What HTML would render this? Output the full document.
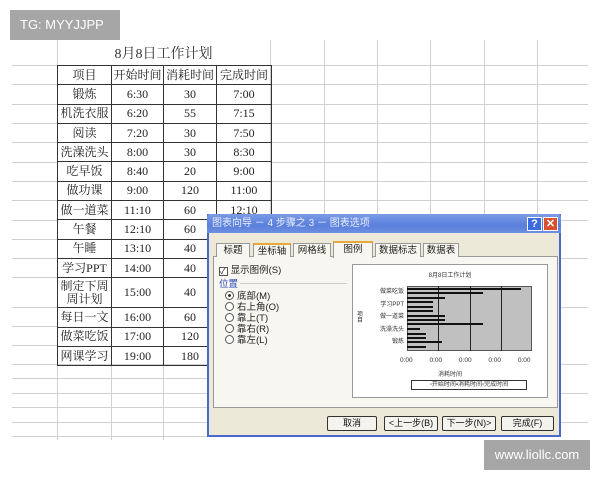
<!DOCTYPE html>
<html><head><meta charset="utf-8"><style>
*{margin:0;padding:0;box-sizing:border-box}
body{width:600px;height:480px;background:#fff;position:relative;overflow:hidden;font-family:"Liberation Sans","Noto Sans CJK SC",sans-serif}
.a{position:absolute}
.hl{position:absolute;height:1px;background:#d0d0d0}
.vl{position:absolute;width:1px;background:#d0d0d0}
.tb{position:absolute;left:57px;top:65px;width:214px;table-layout:fixed;border-collapse:collapse;font-family:"Liberation Serif","Noto Serif CJK SC",serif;font-size:12px;color:#222;white-space:nowrap}
.tb td{border:1.5px solid #333;text-align:center;padding:0;height:19.3px;line-height:15px;overflow:hidden}
.btn{position:absolute;top:416px;height:15px;border:1px solid #333;background:#f4f3ee;font-size:9px;text-align:center;line-height:13px;color:#111;border-radius:2px;white-space:nowrap;overflow:hidden}
.tab{position:absolute;top:243px;height:14px;border:1px solid #999;border-bottom:none;background:#f7f6f1;font-size:9.5px;text-align:center;line-height:13px;color:#222;white-space:nowrap}
.rad{position:absolute;left:225px;font-size:9.5px;color:#222;line-height:11px}
.rad i{display:inline-block;width:9px;height:9px;border:1px solid #555;border-radius:50%;margin-right:3px;vertical-align:-1px;background:#fff}
.bar{position:absolute;left:407px;height:2px;background:#111}
</style></head><body>
<div class="a" style="left:10px;top:10px;width:110px;height:30px;background:#a6a6a6;color:#fff;font-size:13px;line-height:30px;padding-left:10px">TG: MYYJJPP</div>

<div class="vl" style="left:57px;top:40px;height:400px"></div>
<div class="vl" style="left:111px;top:365px;height:75px"></div>
<div class="vl" style="left:163px;top:365px;height:75px"></div>
<div class="vl" style="left:270px;top:40px;height:175px"></div>
<div class="vl" style="left:324px;top:40px;height:175px"></div>
<div class="vl" style="left:377px;top:40px;height:175px"></div>
<div class="vl" style="left:430px;top:40px;height:175px"></div>
<div class="vl" style="left:484px;top:40px;height:175px"></div>
<div class="vl" style="left:537px;top:40px;height:175px"></div>
<div class="hl" style="left:270px;top:65px;width:318px"></div>
<div class="hl" style="left:270px;top:84px;width:318px"></div>
<div class="hl" style="left:270px;top:104px;width:318px"></div>
<div class="hl" style="left:270px;top:123px;width:318px"></div>
<div class="hl" style="left:270px;top:142px;width:318px"></div>
<div class="hl" style="left:270px;top:162px;width:318px"></div>
<div class="hl" style="left:270px;top:181px;width:318px"></div>
<div class="hl" style="left:270px;top:200px;width:318px"></div>
<div class="hl" style="left:12px;top:65px;width:45px"></div>
<div class="hl" style="left:12px;top:84px;width:45px"></div>
<div class="hl" style="left:12px;top:104px;width:45px"></div>
<div class="hl" style="left:12px;top:123px;width:45px"></div>
<div class="hl" style="left:12px;top:142px;width:45px"></div>
<div class="hl" style="left:12px;top:162px;width:45px"></div>
<div class="hl" style="left:12px;top:181px;width:45px"></div>
<div class="hl" style="left:12px;top:200px;width:45px"></div>
<div class="hl" style="left:12px;top:220px;width:45px"></div>
<div class="hl" style="left:12px;top:239px;width:45px"></div>
<div class="hl" style="left:12px;top:258px;width:45px"></div>
<div class="hl" style="left:12px;top:277px;width:45px"></div>
<div class="hl" style="left:12px;top:307px;width:45px"></div>
<div class="hl" style="left:12px;top:326px;width:45px"></div>
<div class="hl" style="left:12px;top:345px;width:45px"></div>
<div class="hl" style="left:12px;top:364px;width:195px"></div>
<div class="hl" style="left:12px;top:378px;width:195px"></div>
<div class="hl" style="left:12px;top:393px;width:195px"></div>
<div class="hl" style="left:12px;top:407px;width:195px"></div>
<div class="hl" style="left:12px;top:422px;width:195px"></div>
<div class="hl" style="left:12px;top:436px;width:195px"></div>
<div class="hl" style="left:561px;top:220px;width:27px"></div>
<div class="hl" style="left:561px;top:258px;width:27px"></div>
<div class="hl" style="left:561px;top:307px;width:27px"></div>
<div class="hl" style="left:561px;top:364px;width:27px"></div>
<div class="hl" style="left:561px;top:393px;width:27px"></div>
<div class="hl" style="left:561px;top:422px;width:27px"></div>

<div class="a" style="left:57px;top:43px;width:213px;text-align:center;font-size:14px;color:#333;font-family:'Liberation Serif','Noto Serif CJK SC',serif">8月8日工作计划</div>

<table class="tb">
<colgroup><col style="width:54px"><col style="width:52px"><col style="width:53px"><col style="width:55px"></colgroup>
<tr><td>项目</td><td>开始时间</td><td>消耗时间</td><td>完成时间</td></tr>
<tr><td>锻炼</td><td>6:30</td><td>30</td><td>7:00</td></tr>
<tr><td>机洗衣服</td><td>6:20</td><td>55</td><td>7:15</td></tr>
<tr><td>阅读</td><td>7:20</td><td>30</td><td>7:50</td></tr>
<tr><td>洗澡洗头</td><td>8:00</td><td>30</td><td>8:30</td></tr>
<tr><td>吃早饭</td><td>8:40</td><td>20</td><td>9:00</td></tr>
<tr><td>做功课</td><td>9:00</td><td>120</td><td>11:00</td></tr>
<tr><td>做一道菜</td><td>11:10</td><td>60</td><td>12:10</td></tr>
<tr><td>午餐</td><td>12:10</td><td>60</td><td>13:10</td></tr>
<tr><td>午睡</td><td>13:10</td><td>40</td><td>13:50</td></tr>
<tr><td>学习PPT</td><td>14:00</td><td>40</td><td>14:40</td></tr>
<tr><td style="height:30px;line-height:13px;white-space:normal">制定下周<br>周计划</td><td>15:00</td><td>40</td><td>15:40</td></tr>
<tr><td>每日一文</td><td>16:00</td><td>60</td><td>17:00</td></tr>
<tr><td>做菜吃饭</td><td>17:00</td><td>120</td><td>19:00</td></tr>
<tr><td>网课学习</td><td>19:00</td><td>180</td><td>22:00</td></tr>
</table>

<div class="a" style="left:207px;top:214px;width:354px;height:223px;background:#ece9d8;border:2px solid #4a68c8;border-top:none"></div>
<div class="a" style="left:207px;top:214px;width:354px;height:19px;background:linear-gradient(#7b9be6,#5a7fdc 60%,#6d8fe0);border-radius:3px 3px 0 0;color:#e8eefc;font-size:10px;line-height:19px;padding-left:5px">图表向导 － 4 步骤之 3 － 图表选项</div>
<div class="a" style="left:527px;top:217px;width:15px;height:14px;background:#3d6be0;border:1px solid #fff;color:#fff;font-size:11px;text-align:center;line-height:12px;font-weight:bold">?</div>
<div class="a" style="left:543px;top:217px;width:15px;height:14px;background:#d9502d;border:1px solid #fff;color:#fff;font-size:11px;text-align:center;line-height:12px;font-weight:bold">✕</div>

<div class="a" style="left:213px;top:256px;width:345px;height:152px;border:1px solid #999;background:#f7f6f1"></div>
<div class="tab" style="left:216px;width:34px">标题</div>
<div class="tab" style="left:253px;width:38px;border-top:2px solid #e8a83a">坐标轴</div>
<div class="tab" style="left:293px;width:38px">网格线</div>
<div class="tab" style="left:333px;top:241px;height:17px;width:40px;border-top:2px solid #e8a83a;background:#f7f6f1">图例</div>
<div class="tab" style="left:375px;width:46px">数据标志</div>
<div class="tab" style="left:423px;width:36px">数据表</div>

<div class="a" style="left:219px;top:262px;font-size:9.5px;color:#222"><span style="display:inline-block;width:9px;height:9px;border:1px solid #555;background:#fff;font-size:8px;line-height:7px;vertical-align:-1px">✓</span> 显示图例(S)</div>
<div class="a" style="left:219px;top:276px;font-size:9.5px;color:#2a4bb8">位置</div>
<div class="hl" style="left:240px;top:283px;width:107px;background:#ccc"></div>
<div class="rad" style="top:291px"><i style="background:radial-gradient(#333 25%,#fff 35%)"></i>底部(M)</div>
<div class="rad" style="top:302px"><i></i>右上角(O)</div>
<div class="rad" style="top:313px"><i></i>靠上(T)</div>
<div class="rad" style="top:324px"><i></i>靠右(R)</div>
<div class="rad" style="top:335px"><i></i>靠左(L)</div>

<div class="a" style="left:352px;top:264px;width:196px;height:134px;border:1px solid #999;background:#fff"></div>
<div class="a" style="left:352px;top:270px;width:196px;text-align:center;font-size:6px;color:#333">8月8日工作计划</div>
<div class="a" style="left:407px;top:286px;width:125px;height:65px;background:#c0c0c0;border:1px solid #555"></div>
<div class="vl" style="left:438px;top:286px;height:65px;background:#222"></div>
<div class="vl" style="left:470px;top:286px;height:65px;background:#222"></div>
<div class="vl" style="left:501px;top:286px;height:65px;background:#222"></div>
<div class="bar" style="top:288px;width:114px"></div>
<div class="bar" style="top:292px;width:76px"></div>
<div class="bar" style="top:297px;width:38px"></div>
<div class="bar" style="top:301px;width:26px"></div>
<div class="bar" style="top:306px;width:26px"></div>
<div class="bar" style="top:310px;width:26px"></div>
<div class="bar" style="top:315px;width:38px"></div>
<div class="bar" style="top:319px;width:38px"></div>
<div class="bar" style="top:323px;width:76px"></div>
<div class="bar" style="top:328px;width:13px"></div>
<div class="bar" style="top:333px;width:19px"></div>
<div class="bar" style="top:337px;width:19px"></div>
<div class="bar" style="top:341px;width:35px"></div>
<div class="bar" style="top:346px;width:19px"></div>
<div class="a" style="left:362px;top:286px;width:42px;text-align:right;font-size:6px;line-height:12.5px;color:#333">做菜吃饭<br>学习PPT<br>做一道菜<br>洗澡洗头<br>锻炼</div>
<div class="a" style="left:357px;top:312px;font-size:6px;color:#333;width:6px;line-height:6px">项目</div>
<div class="a" style="left:400px;top:357px;width:148px;font-size:6.5px;color:#333;word-spacing:15px">0:00 0:00 0:00 0:00 0:00</div>
<div class="a" style="left:352px;top:369px;width:196px;text-align:center;font-size:6px;color:#333">消耗时间</div>
<div class="a" style="left:411px;top:380px;width:116px;height:10px;border:1px solid #333;font-size:6px;line-height:8px;text-align:center;color:#333">▫开始时间▪消耗时间▫完成时间</div>

<div class="btn" style="left:327px;width:50px">取消</div>
<div class="btn" style="left:384px;width:54px">&lt;上一步(B)</div>
<div class="btn" style="left:442px;width:54px">下一步(N)&gt;</div>
<div class="btn" style="left:501px;width:53px">完成(F)</div>

<div class="a" style="left:484px;top:440px;width:106px;height:30px;background:#a6a6a6;color:#fff;font-size:13px;line-height:30px;text-align:center">www.liollc.com</div>
</body></html>
